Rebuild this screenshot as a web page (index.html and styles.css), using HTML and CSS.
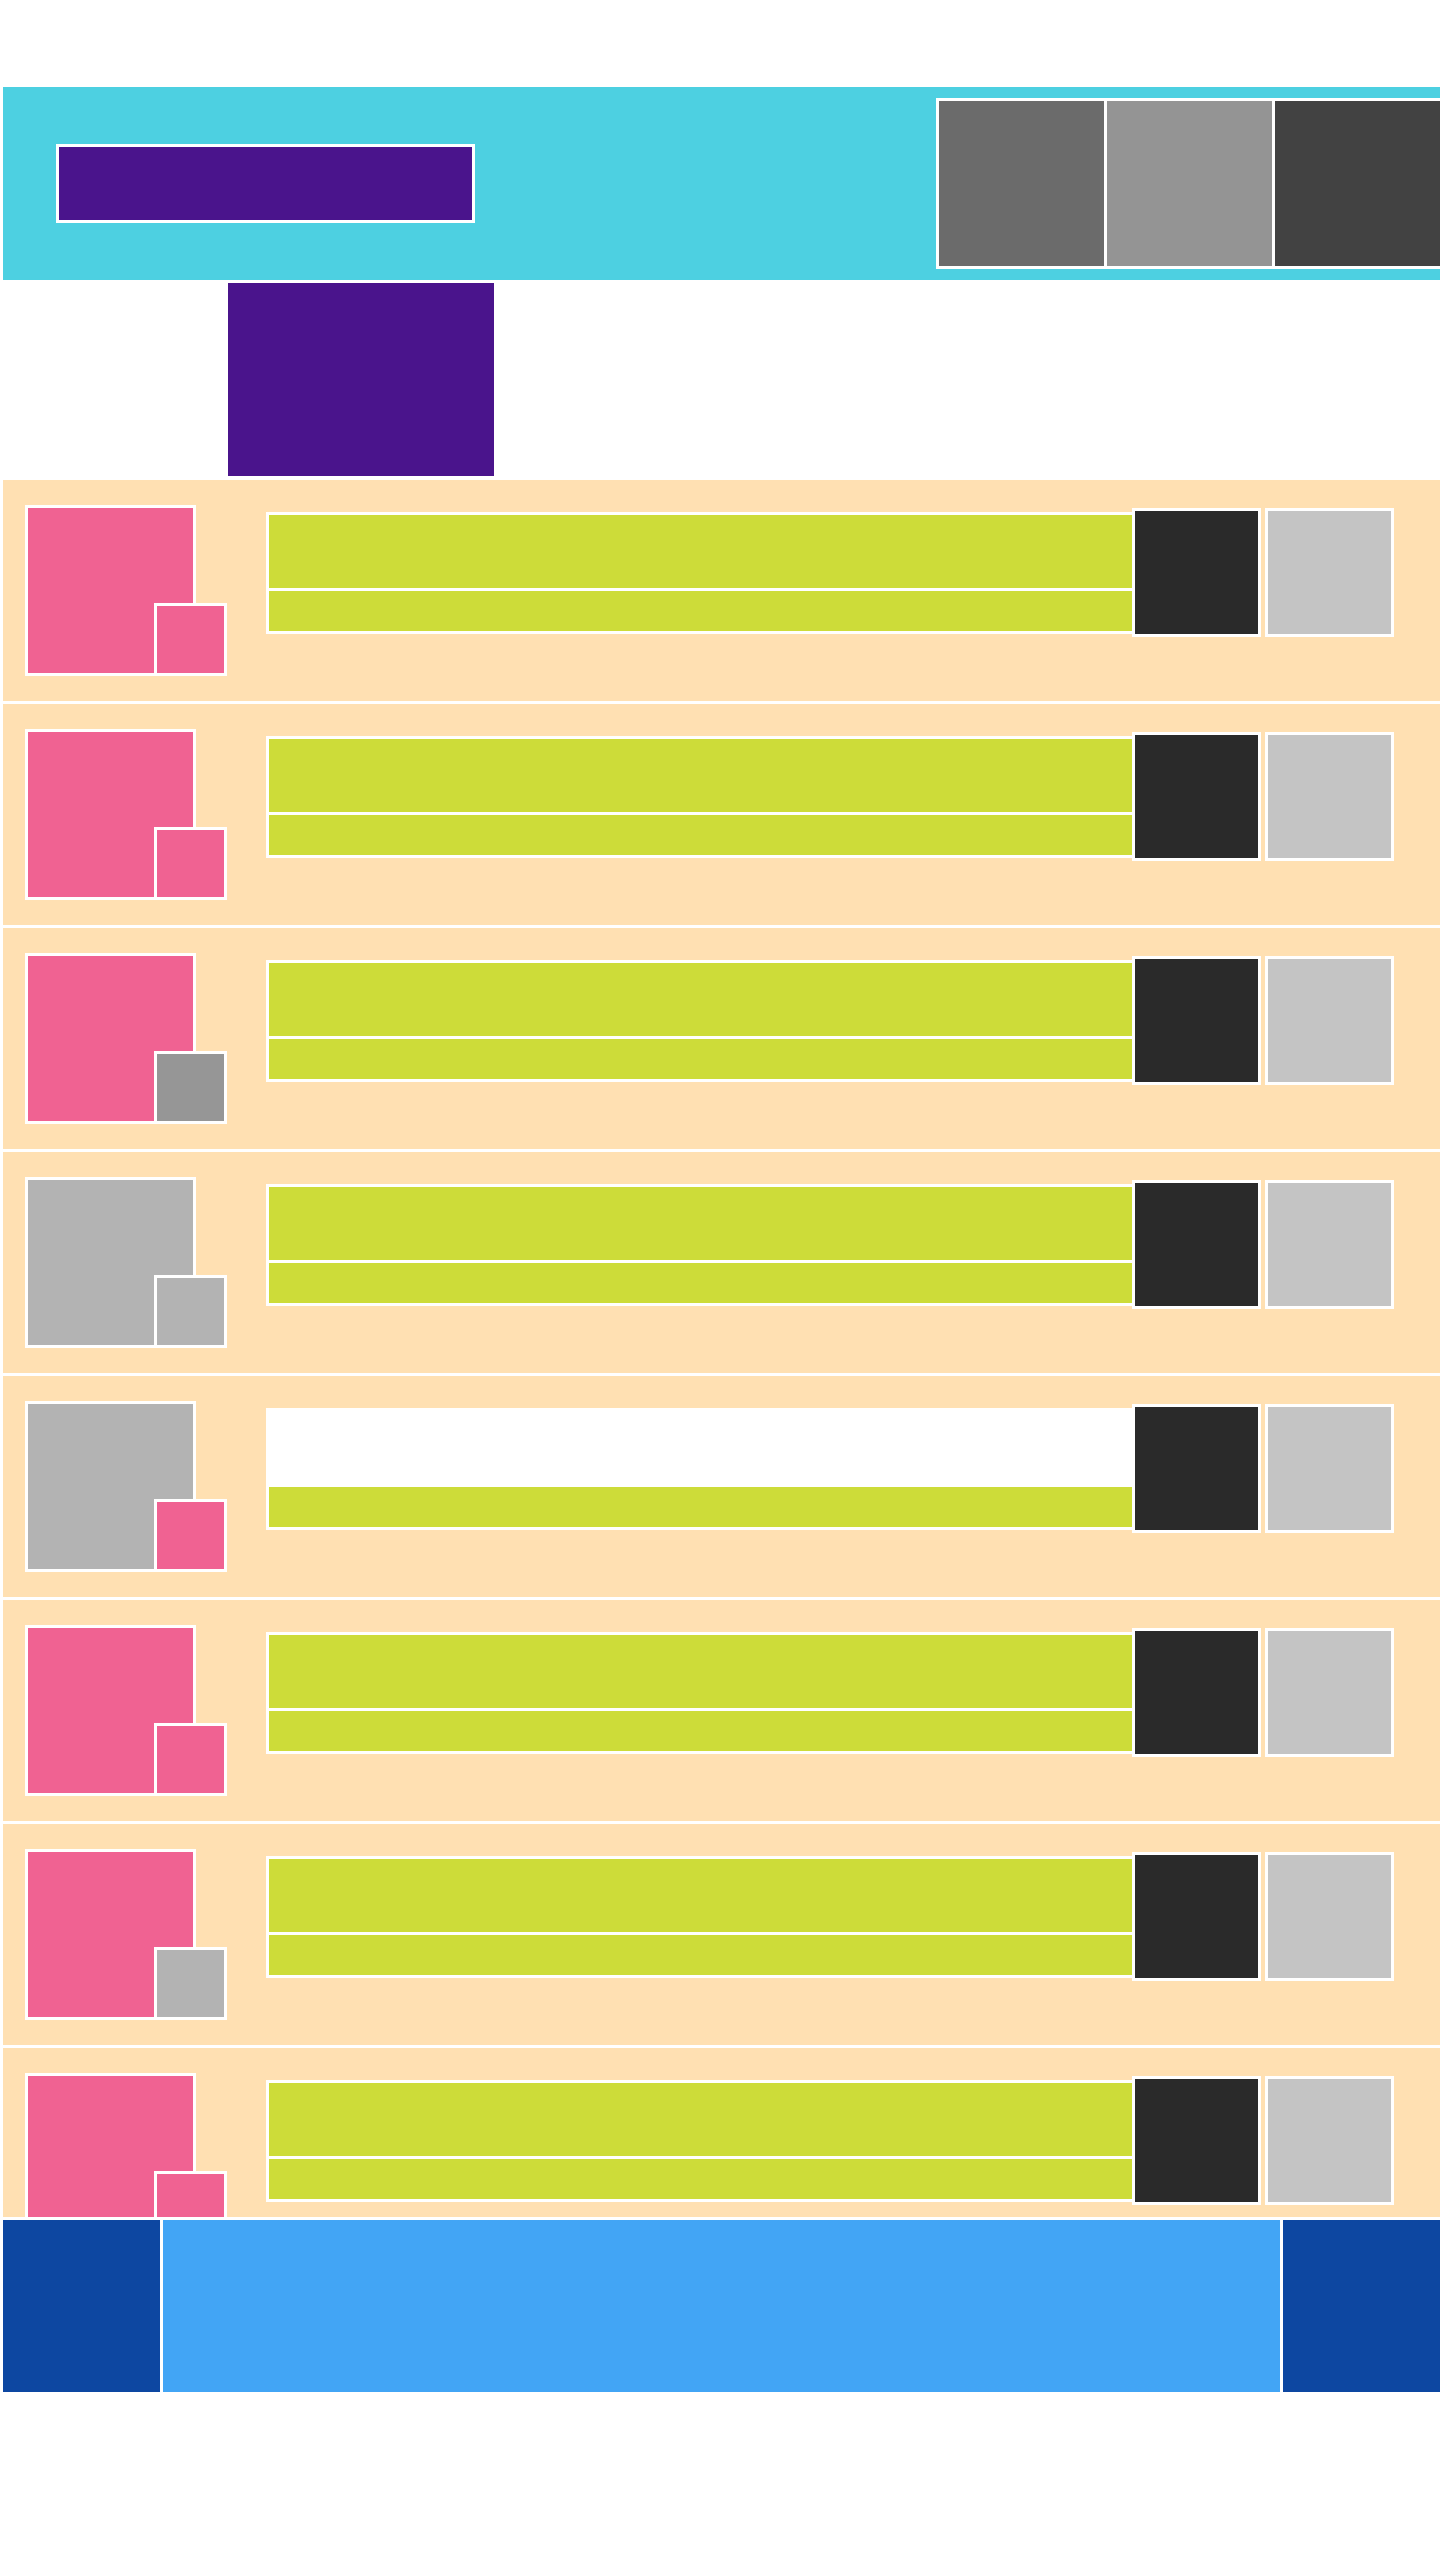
FILE: index.html
```html
<!DOCTYPE html>
<html lang="en">
<head>
    <meta charset="UTF-8">
    <meta name="viewport" content="width=device-width, initial-scale=1.0">
    <title>List</title>
    <link rel="stylesheet" href="styles.css">
</head>
<body>
    <div class="page">
        <header class="topbar">
            <div class="title"></div>
            <div class="tools">
                <div class="tool tool-a"></div>
                <div class="tool tool-b"></div>
                <div class="tool tool-c"></div>
            </div>
        </header>
        <section class="hero">
            <div class="hero-block"></div>
        </section>
        <div class="list">
            <div class="row">
                <div class="avatar"><div class="pic pink"></div><div class="badge pink"></div></div>
                <div class="lines"><div class="line-main"></div><div class="line-sub"></div></div>
                <div class="actions"><div class="act dark"></div><div class="act light"></div></div>
            </div>
            <div class="row">
                <div class="avatar"><div class="pic pink"></div><div class="badge pink"></div></div>
                <div class="lines"><div class="line-main"></div><div class="line-sub"></div></div>
                <div class="actions"><div class="act dark"></div><div class="act light"></div></div>
            </div>
            <div class="row">
                <div class="avatar"><div class="pic pink"></div><div class="badge grey-dark"></div></div>
                <div class="lines"><div class="line-main"></div><div class="line-sub"></div></div>
                <div class="actions"><div class="act dark"></div><div class="act light"></div></div>
            </div>
            <div class="row">
                <div class="avatar"><div class="pic grey"></div><div class="badge grey"></div></div>
                <div class="lines"><div class="line-main"></div><div class="line-sub"></div></div>
                <div class="actions"><div class="act dark"></div><div class="act light"></div></div>
            </div>
            <div class="row">
                <div class="avatar"><div class="pic grey"></div><div class="badge pink"></div></div>
                <div class="lines"><div class="line-main blank"></div><div class="line-sub"></div></div>
                <div class="actions"><div class="act dark"></div><div class="act light"></div></div>
            </div>
            <div class="row">
                <div class="avatar"><div class="pic pink"></div><div class="badge pink"></div></div>
                <div class="lines"><div class="line-main"></div><div class="line-sub"></div></div>
                <div class="actions"><div class="act dark"></div><div class="act light"></div></div>
            </div>
            <div class="row">
                <div class="avatar"><div class="pic pink"></div><div class="badge grey"></div></div>
                <div class="lines"><div class="line-main"></div><div class="line-sub"></div></div>
                <div class="actions"><div class="act dark"></div><div class="act light"></div></div>
            </div>
            <div class="row">
                <div class="avatar"><div class="pic pink"></div><div class="badge pink"></div></div>
                <div class="lines"><div class="line-main"></div><div class="line-sub"></div></div>
                <div class="actions"><div class="act dark"></div><div class="act light"></div></div>
            </div>
        </div>
        <footer class="bottombar">
            <div class="nav-side"></div>
            <div class="nav-main"></div>
            <div class="nav-side"></div>
        </footer>
    </div>
</body>
</html>
```

FILE: styles.css
```css
body { margin: 0; background: #fff; font-family: "Liberation Sans", Arial, sans-serif; }
.page { padding: 87px 0 0 3px; overflow: hidden; }

.topbar { display: flex; align-items: center; height: 193px; background: #4dd0e1; overflow: hidden; }
.title { width: 413px; height: 73px; margin-left: 53px; background: #4a148c; border: 3px solid #fff; }
.tools { display: flex; gap: 3px; margin-left: auto; margin-right: -3px; padding: 3px; background: #fff; }
.tool { width: 165px; height: 165px; }
.tool-a { background: #6b6b6b; }
.tool-b { background: #949494; }
.tool-c { background: #424242; }

.hero { height: 197px; padding-top: 3px; }
.hero-block { width: 266px; height: 193px; margin-left: 225px; background: #4a148c; }

.list { height: 1737px; overflow: hidden; }
.row { display: flex; align-items: flex-start; height: 171px; padding: 25px 46px 25px 22px; margin-bottom: 3px; background: #ffe0b2; }
.avatar { position: relative; width: 202px; height: 171px; flex: none; }
.pic { width: 165px; height: 165px; border: 3px solid #fff; }
.badge { position: absolute; right: 0; bottom: 0; width: 67px; height: 67px; border: 3px solid #fff; }
.pink { background: #f06292; }
.grey { background: #b3b3b3; }
.grey-dark { background: #969696; }

.lines { display: flex; flex-direction: column; gap: 3px; width: 863px; margin: 7px 0 0 39px; padding: 3px 0 3px 3px; background: #fff; flex: none; }
.line-main { height: 73px; background: #cddc39; }
.line-sub { height: 40px; background: #cddc39; }
.line-main.blank { background: #fff; }

.actions { display: flex; gap: 4px; margin-top: 3px; }
.act { width: 123px; height: 123px; border: 3px solid #fff; }
.dark { background: #2a2a2a; }
.light { background: #c4c4c4; }

.bottombar { display: flex; gap: 3px; height: 172px; margin-top: 3px; }
.nav-side { width: 157px; background: #0d47a1; }
.nav-main { flex: 1; background: #42a5f5; }
```
